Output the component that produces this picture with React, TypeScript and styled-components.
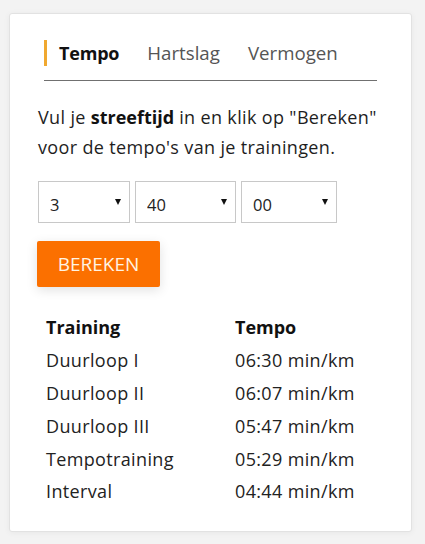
import React from "react";
import styled, { createGlobalStyle } from "styled-components";

const Global = createGlobalStyle`
  html, body { margin: 0; padding: 0; background: #f3f3f3; }
  body { font-family: "Open Sans", Lato, sans-serif; color: #1e1e1e; }
`;

const Page = styled.div`
  padding: 13px 13px 12px 9px;
`;

const Card = styled.div`
  width: 403px;
  height: 519px;
  box-sizing: border-box;
  background: #fff;
  border: 1px solid #e2e2e2;
  border-radius: 3px;
  box-shadow: 0 1px 6px rgba(0, 0, 0, 0.05);
  padding: 26px 29px 0 28px;
`;

const TabList = styled.div`
  display: flex;
  gap: 28px;
  margin: 0 5px 0 6px;
  padding-bottom: 14px;
  border-bottom: 1px solid #707070;
`;

const Tab = styled.div<{ $active?: boolean }>`
  height: 26px;
  line-height: 26px;
  font-size: ${(p) => (p.$active ? "18px" : "18.7px")};
  letter-spacing: ${(p) => (p.$active ? "-0.2px" : "0")};
  font-weight: ${(p) => (p.$active ? 700 : 400)};
  color: ${(p) => (p.$active ? "#111" : "#555")};
  border-left: ${(p) => (p.$active ? "3px solid #f0a830" : "none")};
  padding-left: ${(p) => (p.$active ? "12px" : "0")};
`;

const Intro = styled.p`
  margin: 21px 0 19px 0;
  font-size: 18px;
  line-height: 30px;
  letter-spacing: 0.35px;
  color: #1e1e1e;
  b { font-weight: 700; color: #111; letter-spacing: 0; }
`;

const SelectRow = styled.div`
  display: flex;
  gap: 5px;
`;

const SelectWrap = styled.div<{ $w: number }>`
  position: relative;
  width: ${(p) => p.$w}px;
  &::after {
    content: "";
    position: absolute;
    right: 9px;
    top: 18px;
    border-left: 3.5px solid transparent;
    border-right: 3.5px solid transparent;
    border-top: 6px solid #111;
    pointer-events: none;
  }
`;

const Select = styled.select`
  appearance: none;
  -webkit-appearance: none;
  width: 100%;
  height: 42px;
  box-sizing: border-box;
  border: 1px solid #c8c8c8;
  border-radius: 0;
  background: #fff;
  font-family: "Open Sans", sans-serif;
  font-size: 16.5px;
  color: #222;
  padding: 5px 0 0 11px;
  outline: none;
`;

const Button = styled.button`
  display: block;
  margin-top: 18px;
  margin-left: -1px;
  width: 123px;
  height: 46px;
  padding: 0;
  background: #fb7000;
  color: #fff3e4;
  border: none;
  border-radius: 2px;
  font-family: "Open Sans", sans-serif;
  font-size: 19px;
  box-shadow: 0 3px 12px rgba(0, 0, 0, 0.12);
  cursor: pointer;
`;

const Grid = styled.div`
  margin-top: 24px;
  display: grid;
  grid-template-columns: 189px auto;
  grid-auto-rows: 32.8px;
  align-items: center;
  padding-left: 8px;
  font-size: 18px;
  letter-spacing: 0.35px;
`;

const Head = styled.div`
  font-weight: 700;
  color: #111;
  letter-spacing: 0;
`;

const Cell = styled.div`
  color: #222;
`;

const rows: [string, string][] = [
  ["Duurloop I", "06:30 min/km"],
  ["Duurloop II", "06:07 min/km"],
  ["Duurloop III", "05:47 min/km"],
  ["Tempotraining", "05:29 min/km"],
  ["Interval", "04:44 min/km"],
];

export default function App() {
  return (
    <Page>
      <Global />
      <Card>
        <TabList>
          <Tab $active>Tempo</Tab>
          <Tab>Hartslag</Tab>
          <Tab>Vermogen</Tab>
        </TabList>
        <Intro>
          Vul je <b>streeftijd</b> in en klik op "Bereken" voor de tempo's van je trainingen.
        </Intro>
        <SelectRow>
          <SelectWrap $w={92}>
            <Select defaultValue="3">
              <option>3</option>
            </Select>
          </SelectWrap>
          <SelectWrap $w={101}>
            <Select defaultValue="40">
              <option>40</option>
            </Select>
          </SelectWrap>
          <SelectWrap $w={96}>
            <Select defaultValue="00">
              <option>00</option>
            </Select>
          </SelectWrap>
        </SelectRow>
        <Button>BEREKEN</Button>
        <Grid>
          <Head>Training</Head>
          <Head>Tempo</Head>
          {rows.map(([a, b]) => (
            <React.Fragment key={a}>
              <Cell>{a}</Cell>
              <Cell>{b}</Cell>
            </React.Fragment>
          ))}
        </Grid>
      </Card>
    </Page>
  );
}
